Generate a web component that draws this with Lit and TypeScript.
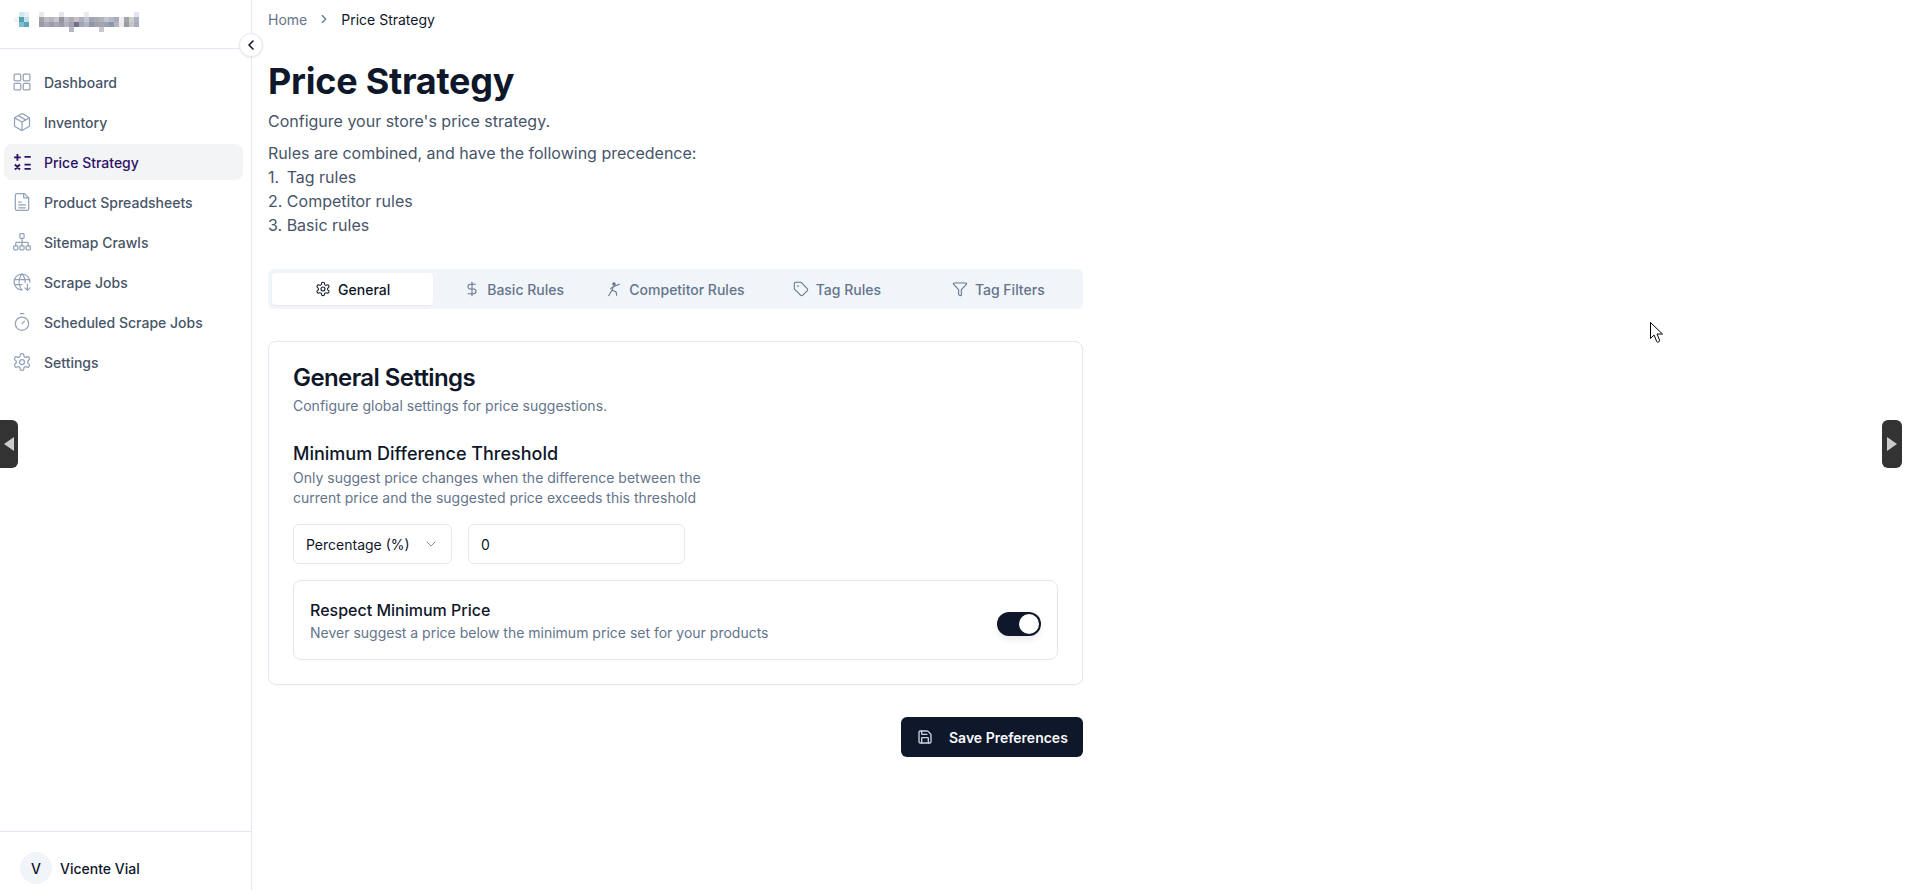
import { LitElement, html, css, svg } from "lit";
import { customElement } from "lit/decorators.js";

const ic = (body: unknown, size = 20, sw = 1.5) => html`<svg class="ic" width=${size} height=${size} viewBox="0 0 24 24" fill="none" stroke="currentColor" stroke-width=${sw} stroke-linecap="round" stroke-linejoin="round">${body}</svg>`;

const gear = svg`<path d="M12.22 2h-.44a2 2 0 0 0-2 2v.18a2 2 0 0 1-1 1.73l-.43.25a2 2 0 0 1-2 0l-.15-.08a2 2 0 0 0-2.73.73l-.22.38a2 2 0 0 0 .73 2.73l.15.1a2 2 0 0 1 1 1.72v.51a2 2 0 0 1-1 1.74l-.15.09a2 2 0 0 0-.73 2.73l.22.38a2 2 0 0 0 2.73.73l.15-.08a2 2 0 0 1 2 0l.43.25a2 2 0 0 1 1 1.73V20a2 2 0 0 0 2 2h.44a2 2 0 0 0 2-2v-.18a2 2 0 0 1 1-1.73l.43-.25a2 2 0 0 1 2 0l.15.08a2 2 0 0 0 2.73-.73l.22-.39a2 2 0 0 0-.73-2.73l-.15-.08a2 2 0 0 1-1-1.74v-.5a2 2 0 0 1 1-1.74l.15-.09a2 2 0 0 0 .73-2.73l-.22-.38a2 2 0 0 0-2.73-.73l-.15.08a2 2 0 0 1-2 0l-.43-.25a2 2 0 0 1-1-1.73V4a2 2 0 0 0-2-2z"/><circle cx="12" cy="12" r="3"/>`;

const nav = [
  ["Dashboard", svg`<rect x="2.5" y="2.5" width="8" height="8" rx="1.5"/><rect x="13.5" y="2.5" width="8" height="8" rx="1.5"/><rect x="2.5" y="13.5" width="8" height="8" rx="1.5"/><rect x="13.5" y="13.5" width="8" height="8" rx="1.5"/>`],
  ["Inventory", svg`<path d="M11 21.7a2 2 0 0 0 2 0l7-4A2 2 0 0 0 21 16V8a2 2 0 0 0-1-1.7l-7-4a2 2 0 0 0-2 0l-7 4A2 2 0 0 0 3 8v8a2 2 0 0 0 1 1.7z"/><path d="M12 22V12"/><path d="M3.3 7 12 12l8.7-5"/><path d="m7.5 4.3 9 5.1"/>`],
  ["Price Strategy", svg`<g stroke-width="2.2" stroke-linecap="butt"><path d="M2.5 6.500h8M6.500 2.500v8M15 5.800h7.500M15 15.200h7.500M15 20.200h7.500M3.500 15l6 6M9.500 15l-6 6"/></g>`],
  ["Product Spreadsheets", svg`<path d="M15 2H6a2 2 0 0 0-2 2v16a2 2 0 0 0 2 2h12a2 2 0 0 0 2-2V7z"/><path d="M14 2v5h6"/><path d="M8 12h3M8 15.500h8M8 19h8"/>`],
  ["Sitemap Crawls", svg`<rect x="9.500" y="2" width="5" height="5.500" rx="1"/><rect x="2" y="16.500" width="5" height="5" rx="1"/><rect x="9.500" y="16.500" width="5" height="5" rx="1"/><rect x="17" y="16.500" width="5" height="5" rx="1"/><path d="M4.500 16.500v-3a1 1 0 0 1 1-1h13a1 1 0 0 1 1 1v3M12 7.500v9"/>`],
  ["Scrape Jobs", svg`<path d="M21.500 12a9.500 9.500 0 1 0-9.500 9.500"/><path d="M3 9h18M3 15h9"/><path d="M11.500 2.500a17 17 0 0 0 0 19M12.500 2.500a17 17 0 0 1 3.500 10"/><path d="M18.500 14.500v7.500M15.500 19l3 3 3-3"/>`],
  ["Scheduled Scrape Jobs", svg`<path d="M10 2h4"/><path d="m12 14 3-3"/><circle cx="12" cy="14" r="8"/>`],
  ["Settings", gear],
] as const;

const tabs = [
  ["General", gear],
  ["Basic Rules", svg`<path d="M12 2v20"/><path d="M17 5H9.500a3.500 3.500 0 0 0 0 7h5a3.500 3.500 0 0 1 0 7H6"/>`],
  ["Competitor Rules", svg`<circle cx="12" cy="4.500" r="1.800" fill="currentColor"/><path d="M11 8 9 14M9 14l-5 8M9 14l6 2 1 5.500M11 8.500l9-3.500M11 8.500l-4 3"/>`],
  ["Tag Rules", svg`<path d="M12.600 2.600A2 2 0 0 0 11.200 2H4a2 2 0 0 0-2 2v7.200a2 2 0 0 0 .6 1.400l8.700 8.700a2.400 2.400 0 0 0 3.400 0l6.600-6.600a2.400 2.400 0 0 0 0-3.400z"/><circle cx="7.500" cy="7.500" r=".5" fill="currentColor"/>`],
  ["Tag Filters", svg`<path d="M10 20a1 1 0 0 0 .55.9l2 1A1 1 0 0 0 14 21v-7a2 2 0 0 1 .52-1.340L21.740 4.670A1 1 0 0 0 21 3H3a1 1 0 0 0-.74 1.670l7.220 7.990A2 2 0 0 1 10 14z"/>`],
] as const;

const W = "transparent";
const mosaicRows = [
  ["#e9e9ec",W,W,W,"#e6e6ee",W,W,W,W,"#eaeaf0",W,W,W,W,W,W,W,W,W,"#e4e4f0"],
  ["#a2a2aa","#bebec6","#b6b6be","#c6c6ce","#94949e","#bcbcca","#b2aab4","#c6c0c8","#aeb0c0","#c4c6ce","#9ea4b6","#aaaab4","#b2b2ba","#c0c4d0","#b4b8c4","#a8acb8","#f0f0f2","#a4a4aa","#ccd0c8","#aeb0c8"],
  ["#9a9aa4","#a8aab8","#9e9aa8","#a8a8b2","#9c9ca8","#b0b0c0","#a4a0ac","#72728a","#a0a4b8","#b0b4c2","#8e96aa","#a0a0ac","#a6a4ac","#98a2b6","#8e98ac","#b2b4c0","#eaeaec","#9a9aa2","#c4c8c0","#a8aac4"],
  [W,W,W,W,W,W,"#b6b6c6",W,W,W,W,W,"#c8c8d0",W,W,W,W,W,W,W],
];

const mark = [
  [W,"#cfe8ee","#e6f0f3"],
  ["#eef6f8","#4fa3b5","#c5dfe6"],
  [W,"#80bccb","#57a8b7"],
];

@customElement("app-root")
export class AppRoot extends LitElement {
  static styles = css`
    :host { display: block; height: 890px; overflow: hidden; position: relative; background: #fff; font-family: Inter, "Noto Sans", sans-serif; color: #0f172a; }
    * { box-sizing: border-box; }
    .ic { flex: none; display: block; }
    .layout { display: flex; height: 890px; }
    .side { width: 252px; flex: none; height: 890px; border-right: 1px solid #e2e8f0; display: flex; flex-direction: column; position: relative; }
    .brand { height: 49px; border-bottom: 1px solid #e2e8f0; display: flex; align-items: flex-start; padding: 12px 0 0 14px; gap: 10px; }
    .mark { display: grid; grid-template-columns: repeat(3, 5px); grid-auto-rows: 5px; }
    .mosaic { display: grid; grid-template-columns: repeat(20, 5px); grid-auto-rows: 5px; }
    .mark i, .mosaic i { display: block; }
    .collapse { position: absolute; left: 239px; top: 33px; width: 24px; height: 24px; border-radius: 50%; background: #fff; border: 1px solid #e2e8f0; display: flex; align-items: center; justify-content: center; color: #0f172a; box-shadow: 0 1px 2px rgba(0,0,0,.08); }
    nav { flex: 1; padding: 15px 8px 0 4px; display: flex; flex-direction: column; gap: 4px; }
    .item { height: 36px; border-radius: 8px; display: flex; align-items: center; gap: 12px; padding-left: 8px; font-size: 14px; font-weight: 500; color: #475569; }
    .item .ic { color: #94a3b8; }
    .item.on { background: #f3f4f6; color: #2e1065; }
    .item.on .ic { color: #2e1065; }
    .user { height: 59px; border-top: 1px solid #e2e8f0; display: flex; align-items: center; gap: 8px; padding: 14px 0 0 20px; font-size: 14px; font-weight: 500; }
    .avatar { width: 32px; height: 32px; border-radius: 50%; background: #f1f5f9; display: flex; align-items: center; justify-content: center; }
    main { flex: 1; padding: 0 16px; min-width: 0; }
    .crumbs { height: 38px; display: flex; align-items: center; font-size: 14px; color: #64748b; }
    .crumbs .ic { margin: 0 10px; }
    .crumbs b { font-weight: 400; color: #0f172a; }
    .content { width: 815px; }
    h1 { margin: 21px 0 0; font-size: 36px; line-height: 45px; font-weight: 700; letter-spacing: -.25px; }
    .lead { margin: 5px 0 0; font-size: 16px; line-height: 24px; color: #475569; }
    .rules { margin: 0; font-size: 16px; line-height: 24px; color: #475569; padding-top: 8px; }
    .num { margin-right: 3px; }
    .tabs { margin-top: 32px; height: 40px; background: #f1f5f9; border-radius: 6px; padding: 4px; display: grid; grid-template-columns: repeat(5, 1fr); }
    .tab { display: flex; align-items: center; justify-content: center; gap: 7px; font-size: 14px; font-weight: 500; color: #64748b; border-radius: 4px; }
    .tab.on { background: #fff; color: #0f172a; box-shadow: 0 1px 2px rgba(0,0,0,.05); }
    .card { margin-top: 32px; border: 1px solid #e2e8f0; border-radius: 8px; padding: 24px; height: 344px; box-shadow: 0 1px 2px rgba(0,0,0,.03); }
    h2 { margin: 0; font-size: 24px; line-height: 24px; font-weight: 600; letter-spacing: -.6px; }
    .desc { margin: 6px 0 0; font-size: 14px; line-height: 20px; color: #64748b; }
    h3 { margin: 24px 0 0; font-size: 18px; line-height: 28px; font-weight: 500; }
    .narrow { margin: 0; width: 420px; font-size: 14px; line-height: 20px; color: #64748b; }
    .fields { margin-top: 16px; display: flex; gap: 16px; }
    .select, .input { height: 40px; border: 1px solid #e2e8f0; border-radius: 6px; display: flex; align-items: center; font-size: 14px; padding: 0 12px; }
    .select { width: 159px; justify-content: space-between; }
    .select .ic { color: #64748b; opacity: .8; }
    .input { width: 217px; }
    .pref { margin-top: 16px; height: 80px; border: 1px solid #e2e8f0; border-radius: 8px; padding: 0 16px; display: flex; align-items: center; justify-content: space-between; }
    .pref b { display: block; font-size: 16px; line-height: 24px; font-weight: 500; }
    .pref span { display: block; margin-top: 1px; font-size: 14px; line-height: 20px; color: #64748b; }
    .switch { width: 44px; height: 24px; margin-top: 8px; border-radius: 12px; background: #0f172a; padding: 2px; display: flex; justify-content: flex-end; box-shadow: 0 4px 6px rgba(0,0,0,.08); }
    .switch i { display: block; width: 20px; height: 20px; border-radius: 50%; background: #fff; }
    .actions { margin-top: 32px; display: flex; justify-content: flex-end; }
    .save { height: 40px; width: 182px; border-radius: 6px; background: #0f172a; color: #f8fafc; display: flex; align-items: center; gap: 16px; padding-left: 16px; font-size: 14px; font-weight: 600; }
    .save .ic { color: #cbd5e1; }
    .handle { position: absolute; top: 420px; width: 18px; height: 48px; background: #333; display: flex; align-items: center; justify-content: center; }
    .handle.l { left: 0; border-radius: 0 6px 6px 0; }
    .handle.r { left: 1882px; width: 20px; border-radius: 6px; }
    .cursor { position: absolute; left: 1650px; top: 322px; }
  `;

  render() {
    return html`
      <div class="layout">
        <aside class="side">
          <div class="brand">
            <div class="mark">${mark.flat().map((c) => html`<i style="background:${c}"></i>`)}</div>
            <div class="mosaic">${mosaicRows.flat().map((c) => html`<i style="background:${c}"></i>`)}</div>
          </div>
          <nav>
            ${nav.map(([label, icon]) => html`<div class="item ${label === "Price Strategy" ? "on" : ""}">${ic(icon)}<span>${label}</span></div>`)}
          </nav>
          <div class="user"><div class="avatar">V</div><span>Vicente Vial</span></div>
          <div class="collapse">${ic(svg`<path d="m15 18-6-6 6-6"/>`, 16, 2.4)}</div>
        </aside>
        <main>
          <div class="crumbs"><span>Home</span>${ic(svg`<path d="m9 18 6-6-6-6"/>`, 14, 2)}<b>Price Strategy</b></div>
          <div class="content">
            <h1>Price Strategy</h1>
            <p class="lead">Configure your store's price strategy.</p>
            <div class="rules">Rules are combined, and have the following precedence:<br /><span class="num">1.</span> Tag rules<br />2. Competitor rules<br />3. Basic rules</div>
            <div class="tabs">
              ${tabs.map(([label, icon], i) => html`<div class="tab ${i === 0 ? "on" : ""}">${ic(icon, 16, 1.6)}<span>${label}</span></div>`)}
            </div>
            <section class="card">
              <h2>General Settings</h2>
              <p class="desc">Configure global settings for price suggestions.</p>
              <h3>Minimum Difference Threshold</h3>
              <p class="narrow">Only suggest price changes when the difference between the current price and the suggested price exceeds this threshold</p>
              <div class="fields">
                <div class="select"><span>Percentage (%)</span>${ic(svg`<path d="m6 9 6 6 6-6"/>`, 16)}</div>
                <div class="input">0</div>
              </div>
              <div class="pref">
                <div><b>Respect Minimum Price</b><span>Never suggest a price below the minimum price set for your products</span></div>
                <div class="switch"><i></i></div>
              </div>
            </section>
            <div class="actions">
              <div class="save">${ic(svg`<path d="M15.200 3a2 2 0 0 1 1.400.6l3.800 3.800a2 2 0 0 1 .6 1.400V19a2 2 0 0 1-2 2H5a2 2 0 0 1-2-2V5a2 2 0 0 1 2-2z"/><path d="M17 21v-7a1 1 0 0 0-1-1H8a1 1 0 0 0-1 1v7"/><path d="M7 3v4a1 1 0 0 0 1 1h7"/>`, 16, 2)}<span>Save Preferences</span></div>
            </div>
          </div>
        </main>
      </div>
      <div class="handle l"><svg width="10" height="14" viewBox="0 0 10 14"><path d="M10 0v14L0 7z" fill="#ccc"/></svg></div>
      <div class="handle r"><svg width="10" height="14" viewBox="0 0 10 14"><path d="M0 0v14l10-7z" fill="#ccc"/></svg></div>
      <svg class="cursor" width="13" height="22" viewBox="0 0 13 22"><path d="M.5.5v16l3.600-3.400 2.600 6.400q.5 1 1.500.6l1-.5q.8-.5.4-1.400L7 12h5.500z" fill="#fff" stroke="#000" stroke-width="1"/></svg>
    `;
  }
}
